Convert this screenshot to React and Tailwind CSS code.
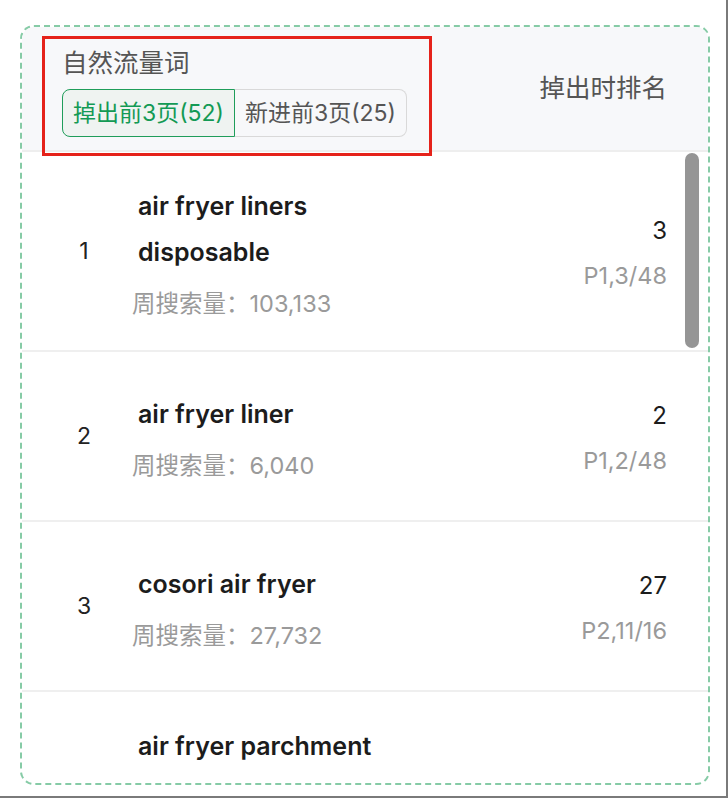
import { useState } from 'react';

const rows = [
  { rank: 1, keyword: 'air fryer liners disposable', volume: '103,133', pos: 3, page: 'P1,3/48' },
  { rank: 2, keyword: 'air fryer liner', volume: '6,040', pos: 2, page: 'P1,2/48' },
  { rank: 3, keyword: 'cosori air fryer', volume: '27,732', pos: 27, page: 'P2,11/16' },
  { rank: 4, keyword: 'air fryer parchment paper liners round for basket', volume: '18,204', pos: 12, page: 'P1,12/48' },
];

const font = { fontFamily: 'Inter, "Noto Sans CJK SC", sans-serif' };

function KeywordRow({ row }) {
  return (
    <div className="flex items-center min-h-[170px] py-[31px] border-b-2 border-[#efefef]">
      <div className="w-[40px] ml-[42px] text-center text-[23px] text-[#222]">{row.rank}</div>
      <div className="ml-[28px] max-w-[280px]">
        <div className="pl-[6px] text-[25px] leading-[46px] font-semibold text-[#1c1c1c]">{row.keyword}</div>
        <div className="mt-[14px] text-[23.5px] leading-[30px] text-[#9a9a9a]">周搜索量：{row.volume}</div>
      </div>
      <div className="ml-auto pr-[41px] pt-[4px] flex flex-col items-end gap-[15px]">
        <div className="text-[24px] leading-[30px] text-[#1c1c1c]">{row.pos}</div>
        <div className="text-[23.5px] leading-[30px] text-[#9a9a9a]">{row.page}</div>
      </div>
    </div>
  );
}

export default function App() {
  const [tab, setTab] = useState('out');

  return (
    <div className="w-[728px] h-[798px] bg-white border-r-2 border-b-2 border-[#7a7a7a] overflow-hidden" style={font}>
      <div className="relative ml-[20px] mt-[25px] w-[690px] h-[760px] rounded-[14px] border-2 border-dashed border-[#86cba6] overflow-hidden">
        <div className="flex items-center justify-between bg-[#f7f8fa] pl-[40px] pr-[41px] pt-[19px] pb-[13px] border-b-2 border-[#eeeeee]">
          <div>
            <div className="text-[25.5px] leading-[34px] text-[#555]">自然流量词</div>
            <div className="flex mt-[9px]">
              <button
                onClick={() => setTab('out')}
                className={`h-[48px] px-[10px] rounded-l-[8px] border-[1.5px] text-[23px] ${tab === 'out' ? 'border-[#1f9d5a] bg-[#eff3f1] text-[#139a55]' : 'border-[#d9d9d9] text-[#555]'}`}
              >
                掉出前3页(52)
              </button>
              <button
                onClick={() => setTab('in')}
                className={`h-[48px] px-[10px] rounded-r-[8px] border-[1.5px] border-l-0 text-[23px] ${tab === 'in' ? 'border-[#1f9d5a] bg-[#eff3f1] text-[#139a55]' : 'border-[#d9d9d9] text-[#555]'}`}
              >
                新进前3页(25)
              </button>
            </div>
          </div>
          <div className="text-[25.5px] leading-[34px] mb-[7px] text-[#555]">掉出时排名</div>
        </div>

        <div className="relative h-[627px] overflow-hidden">
          {rows.map((row) => (
            <KeywordRow key={row.rank} row={row} />
          ))}
          {/* scrollbar thumb */}
          <div className="absolute right-[9px] top-[1px] w-[14px] h-[195px] rounded-full bg-[#959595]" />
        </div>

        {/* annotation box */}
        <div className="absolute left-[20px] top-[9px] w-[390px] h-[120px] border-[3px] border-[#e5221a] pointer-events-none" />
      </div>
    </div>
  );
}
